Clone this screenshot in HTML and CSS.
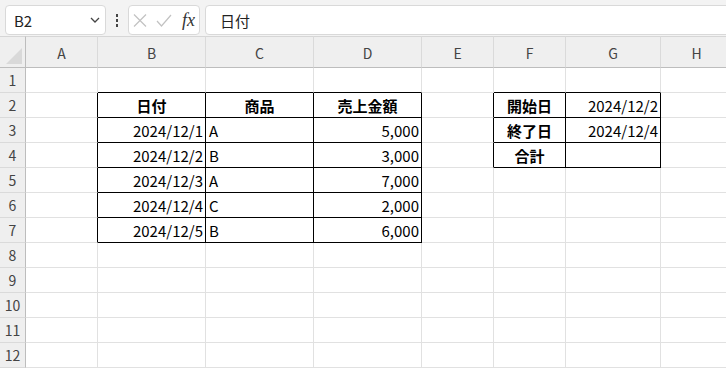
FILE: index.html
```html
<!DOCTYPE html>
<html lang="ja">
<head>
<meta charset="utf-8">
<title>Sheet</title>
<link rel="stylesheet" href="styles.css">
</head>
<body>
<div class="toolbar">
  <div class="namebox">
    <span class="name">B2</span>
    <svg class="chev" width="10" height="6" viewBox="0 0 10 6"><path d="M1 1 L5 5 L9 1" fill="none" stroke="#444" stroke-width="1.3"/></svg>
  </div>
  <div class="dots"><i></i><i></i><i></i></div>
  <div class="fxbox">
    <svg width="14" height="13" viewBox="0 0 14 13"><path d="M1 0.5 L13 12.5 M13 0.5 L1 12.5" stroke="#c2c2c2" stroke-width="1.2" fill="none"/></svg>
    <svg width="16" height="13" viewBox="0 0 16 13"><path d="M1 7 L5.5 12 L15 1" stroke="#c2c2c2" stroke-width="1.2" fill="none"/></svg>
    <span class="fx">fx</span>
  </div>
  <div class="formula">日付</div>
</div>
<div class="grid">
  <div class="corner"><svg width="25" height="31" viewBox="0 0 25 31"><path d="M22 11 L22 27 L6 27 Z" fill="#d9d9d9"/></svg></div>
  <div class="ch">A</div><div class="ch">B</div><div class="ch">C</div><div class="ch">D</div><div class="ch">E</div><div class="ch">F</div><div class="ch">G</div><div class="ch">H</div>

  <div class="rh">1</div>
  <div class="c"></div><div class="c bb"></div><div class="c bb"></div><div class="c bb"></div><div class="c"></div><div class="c bb"></div><div class="c bb"></div><div class="c"></div>

  <div class="rh">2</div>
  <div class="c br"></div><div class="c br bb h">日付</div><div class="c br bb h">商品</div><div class="c br bb h">売上金額</div><div class="c br"></div><div class="c br bb h">開始日</div><div class="c br bb r">2024/12/2</div><div class="c"></div>

  <div class="rh">3</div>
  <div class="c br"></div><div class="c br bb r">2024/12/1</div><div class="c br bb l">A</div><div class="c br bb r">5,000</div><div class="c br"></div><div class="c br bb h">終了日</div><div class="c br bb r">2024/12/4</div><div class="c"></div>

  <div class="rh">4</div>
  <div class="c br"></div><div class="c br bb r">2024/12/2</div><div class="c br bb l">B</div><div class="c br bb r">3,000</div><div class="c br"></div><div class="c br bb h">合計</div><div class="c br bb"></div><div class="c"></div>

  <div class="rh">5</div>
  <div class="c br"></div><div class="c br bb r">2024/12/3</div><div class="c br bb l">A</div><div class="c br bb r">7,000</div><div class="c"></div><div class="c"></div><div class="c"></div><div class="c"></div>

  <div class="rh">6</div>
  <div class="c br"></div><div class="c br bb r">2024/12/4</div><div class="c br bb l">C</div><div class="c br bb r">2,000</div><div class="c"></div><div class="c"></div><div class="c"></div><div class="c"></div>

  <div class="rh">7</div>
  <div class="c br"></div><div class="c br bb r">2024/12/5</div><div class="c br bb l">B</div><div class="c br bb r">6,000</div><div class="c"></div><div class="c"></div><div class="c"></div><div class="c"></div>

  <div class="rh">8</div>
  <div class="c"></div><div class="c"></div><div class="c"></div><div class="c"></div><div class="c"></div><div class="c"></div><div class="c"></div><div class="c"></div>

  <div class="rh">9</div>
  <div class="c"></div><div class="c"></div><div class="c"></div><div class="c"></div><div class="c"></div><div class="c"></div><div class="c"></div><div class="c"></div>

  <div class="rh">10</div>
  <div class="c"></div><div class="c"></div><div class="c"></div><div class="c"></div><div class="c"></div><div class="c"></div><div class="c"></div><div class="c"></div>

  <div class="rh">11</div>
  <div class="c"></div><div class="c"></div><div class="c"></div><div class="c"></div><div class="c"></div><div class="c"></div><div class="c"></div><div class="c"></div>

  <div class="rh">12</div>
  <div class="c"></div><div class="c"></div><div class="c"></div><div class="c"></div><div class="c"></div><div class="c"></div><div class="c"></div><div class="c"></div>
</div>
</body>
</html>
```
FILE: styles.css
```css
* { box-sizing: border-box; }
html, body { margin: 0; padding: 0; }
body {
  width: 726px;
  height: 369px;
  overflow: hidden;
  background: #fff;
  font-family: "Noto Sans CJK JP", "Noto Sans", sans-serif;
  color: #000;
}
.toolbar {
  height: 36px;
  background: #f3f3f3;
  display: flex;
  align-items: flex-start;
  padding: 5px 0 0 5px;
}
.namebox {
  width: 101px;
  height: 30px;
  background: #fff;
  border: 1px solid #d9d9d9;
  border-radius: 4px;
  display: flex;
  align-items: center;
  justify-content: space-between;
  padding: 0 5px 0 8px;
}
.name { font-size: 15px; color: #222; }
.dots {
  width: 22px;
  height: 30px;
  display: flex;
  flex-direction: column;
  align-items: center;
  justify-content: center;
  gap: 2px;
}
.dots i { display: block; width: 2px; height: 3px; background: #444; }
.fxbox {
  width: 72px;
  height: 30px;
  background: #fff;
  border: 1px solid #d9d9d9;
  border-radius: 4px;
  display: flex;
  align-items: center;
  padding: 0 4px 0 4px;
  gap: 9px;
}
.fx {
  font-family: "Liberation Serif", "DejaVu Serif", serif;
  font-style: italic;
  font-size: 18px;
  color: #333;
  margin-left: 1px;
}
.formula {
  flex: 1;
  margin-left: 5px;
  margin-right: -10px;
  height: 30px;
  background: #fff;
  border: 1px solid #d9d9d9;
  border-radius: 4px;
  padding-left: 14px;
  display: flex;
  align-items: center;
  font-size: 15px;
  color: #222;
}
.grid {
  display: grid;
  grid-template-columns: 26px 72px 108px 108px 108px 72px 72px 95px 72px;
  grid-template-rows: 32px repeat(12, 25px) 8px;
  width: 733px;
}
.corner {
  background: #efefef;
  border-right: 1px solid #bdbdbd;
  border-bottom: 1px solid #bdbdbd;
  border-top: 1px solid #d6d6d6;
}
.corner svg { display: block; }
.ch {
  background: #efefef;
  border-top: 1px solid #d6d6d6;
  border-bottom: 1px solid #bdbdbd;
  border-right: 1px solid #dadada;
  display: flex;
  align-items: center;
  justify-content: center;
  font-size: 14px;
  color: #444;
  padding-top: 1px;
}
.rh {
  background: #efefef;
  border-right: 1px solid #bdbdbd;
  border-bottom: 1px solid #dadada;
  display: flex;
  align-items: center;
  justify-content: center;
  font-size: 14px;
  color: #444;
}
.c {
  border-right: 1px solid #e1e1e1;
  border-bottom: 1px solid #e1e1e1;
  font-size: 15px;
  display: flex;
  align-items: center;
  white-space: nowrap;
  overflow: hidden;
  line-height: 1;
}
.c.br { border-right-color: #000; }
.c.bb { border-bottom-color: #000; }
.h { justify-content: center; font-weight: bold; }
.r { justify-content: flex-end; padding-right: 2px; }
.l { justify-content: flex-start; padding-left: 3px; }
```
